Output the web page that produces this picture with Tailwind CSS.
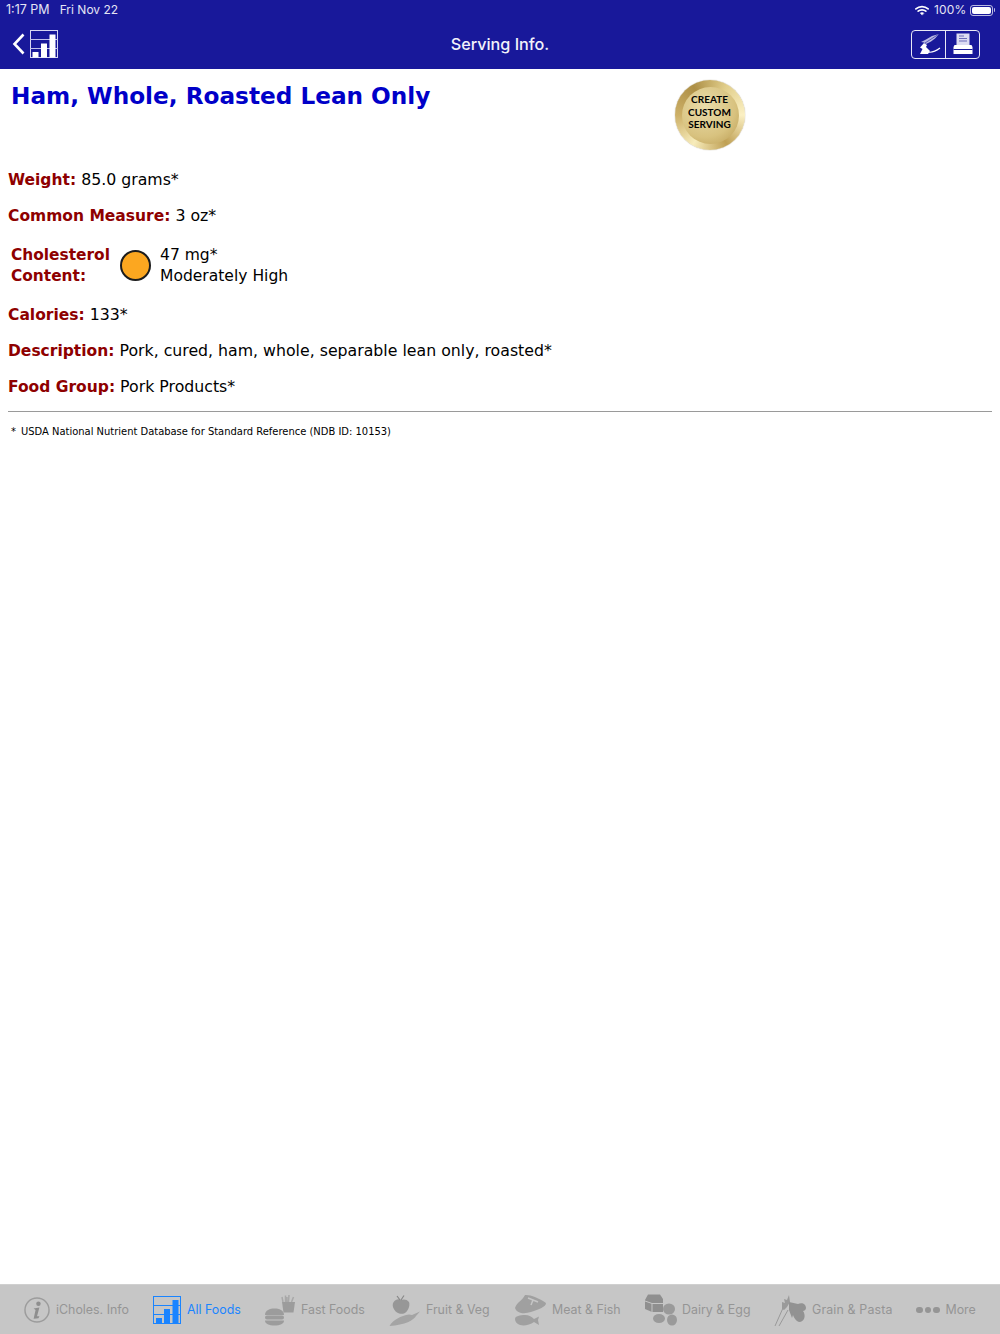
<!DOCTYPE html>
<html lang="en">
<head>
  <meta charset="UTF-8" />
  <title>Serving Info.</title>
  <meta name="viewport" content="width=device-width, initial-scale=1.0" />
  <script src="https://cdn.jsdelivr.net/npm/@tailwindcss/browser@4"></script>
</head>
<body class="bg-white h-[1334px] w-[1000px] overflow-hidden flex flex-col font-['DejaVu_Sans',sans-serif]">

  <!-- status bar + nav -->
  <header class="h-[69px] shrink-0 bg-[#18189a] text-white flex flex-col font-['Inter',sans-serif]">
    <div class="h-[20px] flex items-center justify-between pl-[6px] pr-[5px] text-[12px] text-[#e4e4f4]">
      <div class="flex gap-[10px]"><span class="text-[12.5px]">1:17 PM</span><span>Fri Nov 22</span></div>
      <div class="flex items-center gap-[5px]">
        <svg width="14" height="11" viewBox="0 0 16 12" fill="none" stroke="white" stroke-width="1.9" stroke-linecap="round">
          <path d="M1 4.2 C5 .6 11 .6 15 4.2"/><path d="M3.6 6.8 C6 4.8 10 4.8 12.4 6.8"/><path d="M8 11 L6 8.9 C7.2 8 8.8 8 10 8.9 Z" fill="white" stroke-width="0.6"/>
        </svg>
        <span class="tracking-[0.2px]">100%</span>
        <div class="flex items-center gap-[1px] ml-[-2px]">
          <div class="w-[23px] h-[11px] rounded-[3px] border border-white/70 p-[1px]"><div class="w-full h-full rounded-[2px] bg-white"></div></div>
          <div class="w-[1.5px] h-[4px] rounded-r bg-white/70"></div>
        </div>
      </div>
    </div>
    <div class="relative flex-1 flex items-center justify-between pl-[12px] pr-[20px]">
      <div class="flex items-center gap-[5px] mt-[-1px]">
        <svg width="13" height="22" viewBox="0 0 13 22" fill="none" stroke="white" stroke-width="2.6"><path d="M11.5 1.5 L2.5 11 L11.5 20.5"/></svg>
        <svg width="28" height="28" viewBox="0 0 28 28">
          <rect x=".5" y=".5" width="27" height="27" fill="none" stroke="#d6d6f2" stroke-width="1"/>
          <path d="M0 9.5 H28 M0 18.5 H28" stroke="#c0c0ea" stroke-width="1"/>
          <rect x="2.5" y="22" width="6" height="5.5" fill="white"/>
          <rect x="11" y="13.5" width="6" height="14" fill="white"/>
          <rect x="19.500" y="4.500" width="6" height="23" fill="white"/>
        </svg>
      </div>
      <h1 class="absolute inset-x-0 text-center text-[16.2px] font-medium text-[#f2f2fa] pointer-events-none">Serving Info.</h1>
      <div class="flex w-[69px] h-[29px] border border-[#e8e8f6] rounded-[4px] mt-[-1px]">
        <div class="flex-1 flex items-center justify-center border-r border-[#e8e8f6]">
          <svg width="24" height="24" viewBox="0 0 24 24">
            <path d="M22 2 L15 4 L9 7.500 L4 10 L7 10.500 L9 12 L14 9.500 L18 6.500 Z" fill="#b9b9e2"/>
            <path d="M22 2 L8 11" stroke="#18189a" stroke-width=".6"/>
            <path d="M7 11 L10 13 L9 15 L13 19 L11 22 L3 22 L5.500 17 L3 15.500 Z" fill="white"/>
            <path d="M11 20 C15 21 19 19 23 16" stroke="white" stroke-width="1.100" fill="none"/>
          </svg>
        </div>
        <div class="flex-1 flex items-center justify-center">
          <svg width="22" height="22" viewBox="0 0 22 22">
            <rect x="4.500" y="0.500" width="13" height="12" fill="#dcdcf2"/>
            <path d="M7 3 H12 M7 5.500 H15 M7 8 H15" stroke="#6a6ab8" stroke-width="1"/>
            <path d="M2.500 12 H19.500 L20.500 14 V21 H1.500 V14 Z" fill="white"/>
            <path d="M1.500 16.500 H20.500" stroke="#18189a" stroke-width="1"/>
          </svg>
        </div>
      </div>
    </div>
  </header>

  <main class="flex-1 relative pl-[8px] pr-[8px] text-black text-[15.75px]">
    <h2 class="pl-[3px] pt-[11px] text-[23.2px] leading-[32px] font-bold text-[#0000c8]">Ham, Whole, Roasted Lean Only</h2>

    <!-- medal -->
    <div class="absolute left-[675px] top-[11px] w-[70px] h-[70px] rounded-full flex items-center justify-center bg-[conic-gradient(from_210deg,#f7ecbb,#cdb068,#ad8f46,#e2cf8c,#fbf0c4,#bfa054,#f7ecbb)] shadow-[0_0_1px_#8a7a50]">
      <div class="w-[57px] h-[57px] rounded-full bg-[radial-gradient(circle_at_40%_35%,#e9dcaa,#d8c27f_60%,#b99a50)] flex items-center justify-center text-center text-[10px] leading-[12.500px] font-bold text-black font-['Lato',sans-serif] pb-[6px] pr-[1px]">CREATE<br>CUSTOM<br>SERVING</div>
    </div>

    <dl class="mt-[56px] flex flex-col">
      <div class="h-[36px] leading-[24px]"><dt class="inline font-bold text-[15.5px] text-[#8e0000]">Weight:</dt> <dd class="inline">85.0 grams*</dd></div>
      <div class="h-[36px] leading-[24px]"><dt class="inline font-bold text-[15.5px] text-[#8e0000]">Common Measure:</dt> <dd class="inline">3 oz*</dd></div>
      <div class="flex items-center h-[43px] pl-[3px] mt-[4px] mb-[16px] leading-[21px]">
        <dt class="w-[109px] font-bold text-[15.4px] text-[#8e0000]">Cholesterol Content:</dt>
        <span class="w-[31px] h-[31px] rounded-full bg-[#fca720] border-[2.500px] border-[#1c1c1c]"></span>
        <dd class="ml-[9px] text-[15.55px]">47 mg*<br>Moderately High</dd>
      </div>
      <div class="h-[36px] leading-[24px]"><dt class="inline font-bold text-[15.5px] text-[#8e0000]">Calories:</dt> <dd class="inline">133*</dd></div>
      <div class="h-[36px] leading-[24px]"><dt class="inline font-bold text-[15.5px] text-[#8e0000]">Description:</dt> <dd class="inline">Pork, cured, ham, whole, separable lean only, roasted*</dd></div>
      <div class="h-[36px] leading-[24px]"><dt class="inline font-bold text-[15.5px] text-[#8e0000]">Food Group:</dt> <dd class="inline">Pork Products*</dd></div>
    </dl>

    <hr class="border-0 h-px bg-[#9a9a9a]" />
    <p class="pl-[3px] mt-[13px] text-[9.95px] leading-[14px]">*<span class="ml-[5px]">USDA National Nutrient Database for Standard Reference (NDB ID: 10153)</span></p>
  </main>

  <!-- tab bar -->
  <nav class="relative h-[50px] shrink-0 bg-[#c6c6c6] border-t border-[#d0d0d0] flex items-center text-[12.4px] text-[#959595] font-['Inter',sans-serif]">
    <div class="absolute left-[24px] top-[11px] h-[28px] flex items-center gap-[6px]">
      <svg width="26" height="26" viewBox="0 0 27 27"><circle cx="13.500" cy="13.500" r="12.500" fill="none" stroke="#9c9c9c" stroke-width="1.500"/><circle cx="15" cy="7" r="2.300" fill="#8e8e8e"/><path d="M10 12 L16 11 L13.500 20 L16 20 L15 22 L10 22.500 L12 13.500 Z" fill="#8e8e8e"/></svg>
      <span>iCholes. Info</span>
    </div>
    <div class="absolute left-[153px] top-[11px] flex items-center gap-[6px] text-[#1a84ff]">
      <svg width="28" height="28" viewBox="0 0 28 28"><rect x=".5" y=".5" width="27" height="27" fill="none" stroke="#1a84ff"/><path d="M0 9.500 H28 M0 18.500 H28" stroke="#1a84ff" stroke-width="1"/><rect x="3" y="22" width="6" height="6" fill="#1a84ff"/><rect x="11" y="13" width="6" height="15" fill="#1a84ff"/><rect x="19.500" y="4" width="6" height="24" fill="#1a84ff"/></svg>
      <span>All Foods</span>
    </div>
    <div class="absolute left-[264px] top-[9px] flex items-center gap-[5px]">
      <svg width="32" height="32" viewBox="0 0 32 32" fill="#9c9c9c"><path d="M1 21 C1 16 6 14.500 10.500 14.500 C15 14.500 20 16 20 21 Z"/><rect x="1" y="21.500" width="19" height="4" rx="2"/><path d="M1 26.500 H20 C20 30 16 31.500 10.500 31.500 C5 31.500 1 30 1 26.500 Z"/><path d="M18 8 H31 L29.500 18.500 H19.500 Z"/><path d="M19 8 L18 3 M21.500 8 L21.500 1.500 M24.500 8 L25 1 M27.500 8 L29.500 3 M23 8 L23 3" stroke="#a8a8a8" stroke-width="1.500"/></svg>
      <span>Fast Foods</span>
    </div>
    <div class="absolute left-[389px] top-[9px] flex items-center gap-[6px]">
      <svg width="31" height="32" viewBox="0 0 31 32" fill="#979797"><path d="M6 6.500 C8.500 5 10.500 5 12 6 C14 5 18 5 20 8 C21.500 12 18.500 18 15 19.500 C13 20 10 20 8 18.500 C4.500 16 1.500 10 6 6.500 Z"/><path d="M11 6 L8 2 M12 6 L15 1.500" stroke="#888" stroke-width="1.200"/><path d="M0.500 32 C4 26 12 21.500 20 20.500 L23 21 L31 17.500 L27 22 C25 26 16 31 0.500 32 Z" fill="#a4a4a4"/></svg>
      <span>Fruit &amp; Veg</span>
    </div>
    <div class="absolute left-[514px] top-[9px] flex items-center gap-[6px]">
      <svg width="32" height="32" viewBox="0 0 32 32" fill="#a0a0a0"><path d="M1 14 C3 8 8 7 11 1 C16 0.500 25 4 32 9 C32 13 25 15 17 18 C11 20 3 20 1 14 Z"/><path d="M14 4 L24 8 M19 6 L17 11" stroke="#c6c6c6" stroke-width="1.500" fill="none"/><path d="M1 25 C1 22 6 21 11 21 C15 21 18 23 20 25 L25 22.500 L24 26 L25 31 L20 28 C16 31 10 32 6 31 C3 30 1 28 1 25 Z"/></svg>
      <span>Meat &amp; Fish</span>
    </div>
    <div class="absolute left-[644px] top-[9px] flex items-center gap-[5px]">
      <svg width="33" height="32" viewBox="0 0 33 32" fill="#8f8f8f"><path d="M1 6 L4 0.500 H16 L19 5 V18 L8 18 L1 15 Z"/><path d="M1 7 L8 9.500 H19 M8 9.500 V18" stroke="#c6c6c6" stroke-width="1" fill="none"/><ellipse cx="25" cy="15" rx="6" ry="5.500" fill="#9a9a9a"/><ellipse cx="15" cy="24.500" rx="6" ry="4.500" fill="#9a9a9a"/><ellipse cx="28" cy="26" rx="5" ry="5.500" fill="#9a9a9a"/></svg>
      <span class="tracking-[0.02px]">Dairy &amp; Egg</span>
    </div>
    <div class="absolute left-[774px] top-[9px] flex items-center gap-[6px]">
      <svg width="32" height="32" viewBox="0 0 32 32" fill="#a2a2a2"><path d="M1 32 L9 14 M5 32 L14 16" stroke="#999" stroke-width="1" fill="none"/><path d="M8 15 L8 8 L11 9 L10 5 L13 6 L15 1 L16 8 L13 13 L10 16 Z" fill="#9a9a9a"/><path d="M15 8 L24 10 C28 8 32 10 32 14 C32 16 30 17 29 17 C32 21 31 28 25 28 C22 27 20 24 19 21 L18 24 L15 16 Z" fill="#929292"/></svg>
      <span class="tracking-[0.15px]">Grain &amp; Pasta</span>
    </div>
    <div class="absolute left-[916px] top-[11px] h-[28px] flex items-center gap-[6px]">
      <div class="flex gap-[2px]"><i class="w-[6.500px] h-[6.500px] rounded-full bg-[#959595]"></i><i class="w-[6.500px] h-[6.500px] rounded-full bg-[#959595]"></i><i class="w-[6.500px] h-[6.500px] rounded-full bg-[#959595]"></i></div>
      <span>More</span>
    </div>
  </nav>

</body>
</html>
